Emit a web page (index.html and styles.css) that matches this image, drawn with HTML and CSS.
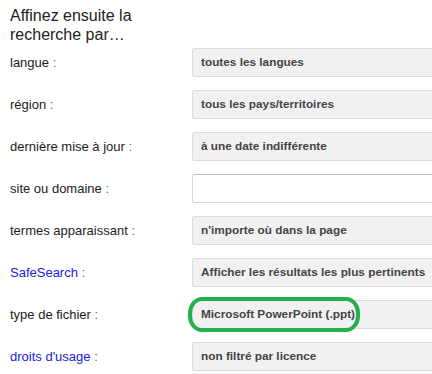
FILE: index.html
```html
<!DOCTYPE html>
<html lang="fr">
<head>
<meta charset="utf-8">
<link rel="stylesheet" href="styles.css">
</head>
<body>
<div class="page">
  <h2 class="title">Affinez ensuite la<br>recherche par…</h2>
  <div class="rows">
    <div class="row"><span class="label">langue <span class="colon">:</span></span><div class="box">toutes les langues</div></div>
    <div class="row"><span class="label">région <span class="colon">:</span></span><div class="box">tous les pays/territoires</div></div>
    <div class="row"><span class="label">dernière mise à jour <span class="colon">:</span></span><div class="box">à une date indifférente</div></div>
    <div class="row"><span class="label">site ou domaine <span class="colon">:</span></span><div class="box input"></div></div>
    <div class="row"><span class="label">termes apparaissant <span class="colon">:</span></span><div class="box">n'importe où dans la page</div></div>
    <div class="row"><span class="label"><span class="link">SafeSearch</span> <span class="colon">:</span></span><div class="box">Afficher les résultats les plus pertinents</div></div>
    <div class="row"><span class="label">type de fichier <span class="colon">:</span></span><div class="box marked">Microsoft PowerPoint (.ppt)<span class="oval"></span></div></div>
    <div class="row"><span class="label"><span class="link">droits d'usage</span> <span class="colon">:</span></span><div class="box">non filtré par licence</div></div>
  </div>
</div>
</body>
</html>
```
FILE: styles.css
```css
html, body {
  margin: 0;
  padding: 0;
  background: #fff;
  overflow: hidden;
}
.page {
  width: 432px;
  padding: 6px 0 0 10px;
  box-sizing: border-box;
  font-family: "Liberation Sans", Arial, sans-serif;
}
.title {
  margin: 0;
  font-size: 16px;
  line-height: 19px;
  font-weight: normal;
  color: #222;
  height: 42px;
}
.rows {
  display: flex;
  flex-direction: column;
  gap: 13px;
}
.row {
  display: grid;
  grid-template-columns: 182px 260px;
  align-items: center;
  height: 29px;
}
.label {
  font-size: 13px;
  color: #222;
}
.colon {
  color: #666;
}
.link {
  color: #1a1ae0;
}
.box {
  position: relative;
  box-sizing: border-box;
  height: 29px;
  border: 1px solid #dcdcdc;
  border-radius: 2px;
  background: #f1f1f1;
  padding: 0 8px;
  font-size: 11.8px;
  font-weight: bold;
  color: #444;
  line-height: 27px;
  white-space: nowrap;
}
.box.input {
  background: #fff;
  border-color: #c0c0c0 #d9d9d9 #d9d9d9 #d9d9d9;
}
.oval {
  position: absolute;
  left: -5px;
  top: -4px;
  width: 172px;
  height: 35px;
  border: 4px solid #22b14c;
  border-radius: 14px / 16px;
  box-sizing: border-box;
}
```
